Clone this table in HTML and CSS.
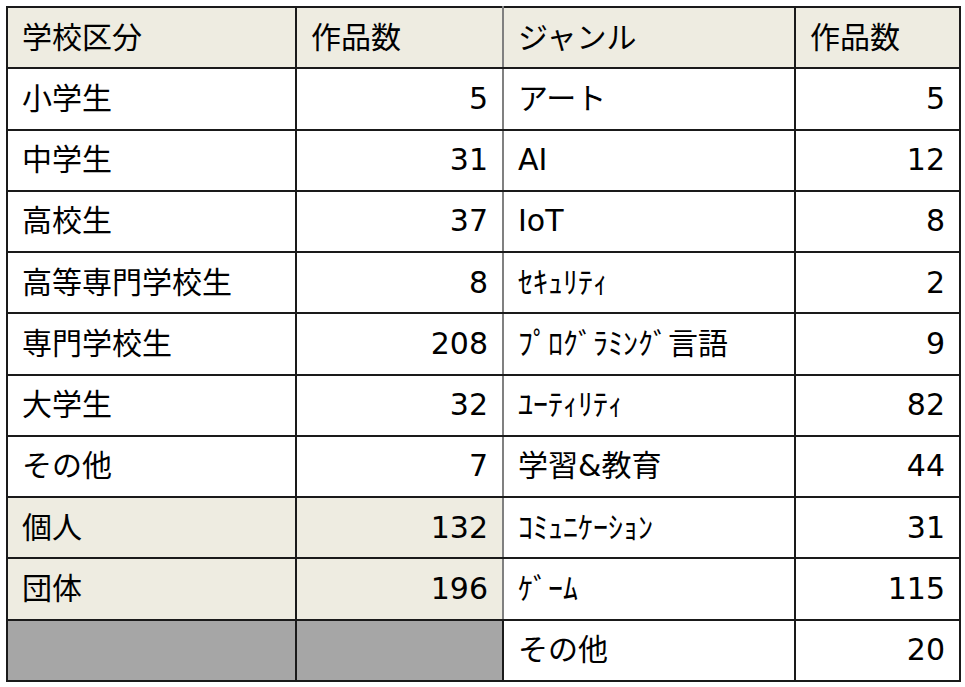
FILE: index.html
```html
<!DOCTYPE html>
<html lang="ja">
<head>
<meta charset="utf-8">
<link rel="stylesheet" href="styles.css">
</head>
<body>
<table class="grid">
  <colgroup>
    <col class="c1"><col class="c2"><col class="c3"><col class="c4">
  </colgroup>
  <tr class="head">
    <td>学校区分</td><td class="sep-r">作品数</td><td>ジャンル</td><td>作品数</td>
  </tr>
  <tr><td>小学生</td><td class="num sep-r">5</td><td>アート</td><td class="num">5</td></tr>
  <tr><td>中学生</td><td class="num sep-r">31</td><td>AI</td><td class="num">12</td></tr>
  <tr><td>高校生</td><td class="num sep-r">37</td><td>IoT</td><td class="num">8</td></tr>
  <tr><td>高等専門学校生</td><td class="num sep-r">8</td><td>ｾｷｭﾘﾃｨ</td><td class="num">2</td></tr>
  <tr><td>専門学校生</td><td class="num sep-r">208</td><td>ﾌﾟﾛｸﾞﾗﾐﾝｸﾞ言語</td><td class="num">9</td></tr>
  <tr><td>大学生</td><td class="num sep-r">32</td><td>ﾕｰﾃｨﾘﾃｨ</td><td class="num">82</td></tr>
  <tr><td>その他</td><td class="num sep-r">7</td><td>学習&amp;教育</td><td class="num">44</td></tr>
  <tr><td class="tint">個人</td><td class="num tint sep-r">132</td><td>ｺﾐｭﾆｹｰｼｮﾝ</td><td class="num">31</td></tr>
  <tr><td class="tint">団体</td><td class="num tint sep-r">196</td><td>ｹﾞｰﾑ</td><td class="num">115</td></tr>
  <tr><td class="blank"></td><td class="blank"></td><td>その他</td><td class="num">20</td></tr>
</table>
</body>
</html>
```
FILE: styles.css
```css
html, body {
  margin: 0;
  padding: 0;
  background: #ffffff;
}
body {
  padding: 6px 0 0 6px;
  font-family: "DejaVu Sans", "Noto Sans CJK JP", sans-serif;
  font-size: 30px;
  color: #000;
}
.grid {
  border-collapse: collapse;
  table-layout: fixed;
  width: 953px;
  height: 676px;
}
.c1 { width: 289px; }
.c2 { width: 207px; }
.c3 { width: 292px; }
.c4 { width: 165px; }
.grid td {
  border: 2px solid #1a1a1a;
  padding: 0 14px 0 14px;
  vertical-align: middle;
  white-space: nowrap;
  line-height: 1;
}
.grid td.num {
  text-align: right;
}
.grid td.sep-r {
  border-right-color: #808080;
}
.head td {
  background: #eeece1;
}
.grid td.tint {
  background: #eeece1;
}
.grid td.blank {
  background: #a6a6a6;
}
```
